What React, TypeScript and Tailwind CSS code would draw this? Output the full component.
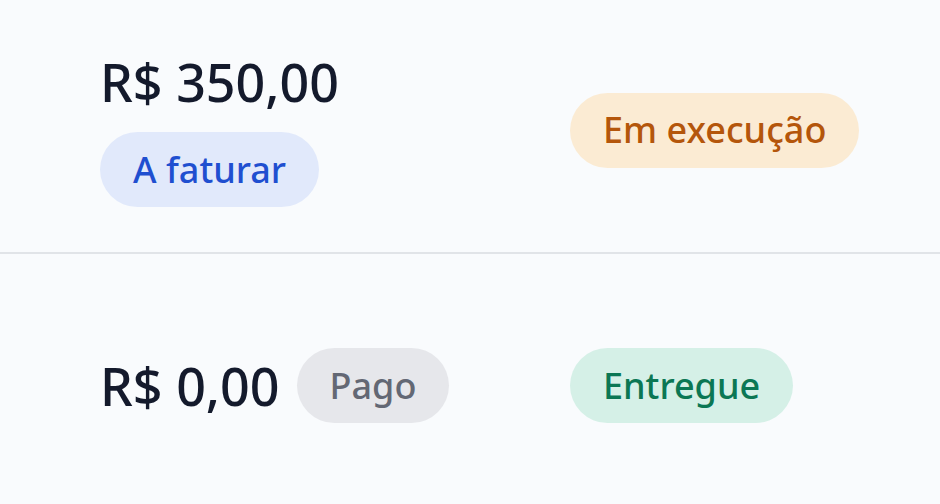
import React from "react";

type Tone = "blue" | "amber" | "gray" | "green";

const toneClass: Record<Tone, string> = {
  blue: "bg-[#e1e9fb] text-[#1f4fd0]",
  amber: "bg-[#fbebd3] text-[#b4560b]",
  gray: "bg-[#e6e7eb] text-[#636874]",
  green: "bg-[#d5f0e7] text-[#0b7754]",
};

function Badge({ tone, children }: { tone: Tone; children: React.ReactNode }) {
  return (
    <span
      className={`inline-flex items-center h-[75px] px-[33px] rounded-full text-[36px] font-medium leading-none ${toneClass[tone]}`}
    >
      {children}
    </span>
  );
}

export default function App() {
  return (
    <div
      className="w-[940px] h-[504px] bg-[#f9fbfd] text-[#141a2c] overflow-hidden"
      style={{ fontFamily: '"Noto Sans", "Open Sans", sans-serif' }}
    >
      <div className="h-[254px] flex items-center pl-[100px] pt-[8px] border-b-2 border-[#e1e4e8]">
        <div className="w-[470px] flex flex-col items-start gap-[24px] pt-[3px]">
          <span className="text-[52px] font-medium leading-none">R$ 350,00</span>
          <Badge tone="blue">A faturar</Badge>
        </div>
        <Badge tone="amber">Em execução</Badge>
      </div>
      <div className="h-[250px] flex items-center pl-[100px] pt-[13px]">
        <div className="w-[470px] flex items-center gap-[17px]">
          <span className="text-[52px] font-medium leading-none">R$ 0,00</span>
          <Badge tone="gray">Pago</Badge>
        </div>
        <Badge tone="green">Entregue</Badge>
      </div>
    </div>
  );
}
